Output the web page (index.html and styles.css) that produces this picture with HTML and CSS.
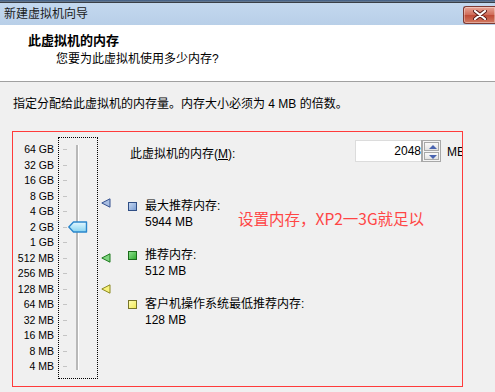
FILE: index.html
```html
<!DOCTYPE html>
<html lang="zh-CN">
  <head>
    <meta charset="UTF-8" />
    <title>新建虚拟机向导</title>
    <link rel="stylesheet" href="styles.css">
  </head>
  <body>
    <div class="window">
      <div class="top-edge"></div>
      <div class="titlebar">
        <span class="title">新建虚拟机向导</span>
        <button class="close" aria-label="关闭">
          <svg width="14" height="10" viewBox="0 0 14 10">
            <path d="M2 1 L12 9 M12 1 L2 9" stroke="#5a1e1a" stroke-width="4" stroke-linecap="round" />
            <path d="M2 1 L12 9 M12 1 L2 9" stroke="#fff" stroke-width="2.2" stroke-linecap="round" />
          </svg>
        </button>
      </div>

      <div class="header">
        <h1>此虚拟机的内存</h1>
        <p>您要为此虚拟机使用多少内存?</p>
      </div>

      <div class="content">
        <p class="intro">指定分配给此虚拟机的内存量。内存大小必须为 4 MB 的倍数。</p>

        <div class="panel">
          <ul class="scale">
            <li>64 GB</li>
            <li>32 GB</li>
            <li>16 GB</li>
            <li>8 GB</li>
            <li>4 GB</li>
            <li>2 GB</li>
            <li>1 GB</li>
            <li>512 MB</li>
            <li>256 MB</li>
            <li>128 MB</li>
            <li>64 MB</li>
            <li>32 MB</li>
            <li>16 MB</li>
            <li>8 MB</li>
            <li>4 MB</li>
          </ul>

          <!-- vertical slider -->
          <div class="slider">
            <ul class="ticks">
              <li></li><li></li><li></li><li></li><li></li>
              <li></li><li></li><li></li><li></li><li></li>
              <li></li><li></li><li></li><li></li><li></li>
            </ul>
            <div class="track"></div>
            <svg class="thumb" width="20" height="12" viewBox="0 0 20 12">
              <defs>
                <linearGradient id="thumbFill" x1="0" y1="0" x2="0" y2="1">
                  <stop offset="0" stop-color="#e4f8ff" />
                  <stop offset="1" stop-color="#86d3f0" />
                </linearGradient>
              </defs>
              <path d="M0.8 6 L5.5 1 H18.5 V11 H5.5 Z" fill="url(#thumbFill)" stroke="#2a86cc" stroke-width="1.4" stroke-linejoin="round" />
            </svg>
          </div>

          <div class="markers">
            <svg class="marker max" width="10" height="10" viewBox="0 0 10 10">
              <path d="M0.8 5 L9 0.8 V9.2 Z" fill="#a7bde2" stroke="#34508f" stroke-width="1" />
            </svg>
            <svg class="marker rec" width="10" height="10" viewBox="0 0 10 10">
              <path d="M0.8 5 L9 0.8 V9.2 Z" fill="#7fd47f" stroke="#1d7a1d" stroke-width="1" />
            </svg>
            <svg class="marker min" width="10" height="10" viewBox="0 0 10 10">
              <path d="M0.8 5 L9 0.8 V9.2 Z" fill="#f7f27c" stroke="#8c8820" stroke-width="1" />
            </svg>
          </div>

          <div class="details">
            <div class="mem-row">
              <label for="memSize">此虚拟机的内存(<u>M</u>):</label>
              <div class="spin">
                <input id="memSize" type="text" value="2048" />
                <div class="spin-btns">
                  <button class="up"></button>
                  <button class="down"></button>
                </div>
              </div>
              <span class="unit">MB</span>
            </div>

            <ul class="legend">
              <li>
                <span class="swatch blue"></span>
                <div>
                  <div>最大推荐内存:</div>
                  <div>5944 MB</div>
                </div>
              </li>
              <li>
                <span class="swatch green"></span>
                <div>
                  <div>推荐内存:</div>
                  <div>512 MB</div>
                </div>
              </li>
              <li>
                <span class="swatch yellow"></span>
                <div>
                  <div>客户机操作系统最低推荐内存:</div>
                  <div>128 MB</div>
                </div>
              </li>
            </ul>
          </div>

          <p class="note">设置内存，XP2一3G就足以</p>
        </div>
      </div>
    </div>
  </body>
</html>
```

FILE: styles.css
```css
/* Basic reset */
* {
  margin: 0;
  padding: 0;
  box-sizing: border-box;
}

body {
  font-family: "Liberation Sans", "Noto Sans CJK SC", sans-serif;
  font-size: 12px;
  color: #000;
  background-color: #f0f0f0;
  width: 495px;
  height: 392px;
  overflow: hidden;
}

ul {
  list-style: none;
}

.window {
  height: 392px;
  display: flex;
  flex-direction: column;
}

/* Title bar */
.top-edge {
  height: 3px;
  background: linear-gradient(#3c5a84, #6f7f92);
  border-bottom: 1px solid #3a3f46;
}

.titlebar {
  height: 22px;
  display: flex;
  align-items: center;
  justify-content: space-between;
  padding-left: 4px;
  background: linear-gradient(#c3d8ef, #b8cfe8);
}

.title {
  line-height: 16px;
  color: #1a1a1a;
}

.close {
  width: 32px;
  height: 18px;
  margin-top: 1px;
  display: flex;
  align-items: center;
  justify-content: center;
  border: 1px solid #7d3a33;
  border-right: none;
  border-radius: 3px 0 0 3px;
  background: linear-gradient(#e8a597, #cf6a57 50%, #bf4a36 51%, #d27a62);
  box-shadow: inset 0 0 0 1px rgba(255, 255, 255, 0.35);
}

/* Header */
.header {
  height: 57px;
  background-color: #fff;
  padding-top: 7px;
  border-bottom: 1px solid #a0a0a0;
}

.header h1 {
  font-size: 13px;
  font-weight: bold;
  line-height: 18px;
  padding-left: 28px;
}

.header p {
  line-height: 18px;
  padding-left: 56px;
}

/* Content */
.content {
  flex: 1;
  padding: 14px 0 0 13px;
}

.intro {
  line-height: 16px;
}

.panel {
  position: relative;
  margin: 19px 0 0 -1px;
  width: 451px;
  height: 256px;
  border: 1px solid #ff3b3b;
  padding: 5px 0 0 0;
  display: flex;
  overflow: hidden;
}

.scale {
  flex: none;
  width: 41px;
  margin: 5px 4px 0 0;
  text-align: right;
  font-size: 10.5px;
}

.scale li {
  height: 15.5px;
  line-height: 15.5px;
}

/* Slider */
.slider {
  flex: none;
  position: relative;
  width: 40px;
  height: 242px;
  border: 1px dotted #000;
  display: flex;
}

.ticks {
  margin: 4px 0 0 4px;
  width: 5px;
}

.ticks li {
  height: 15.5px;
  display: flex;
  align-items: center;
}

.ticks li::before {
  content: "";
  width: 4px;
  height: 1px;
  background-color: #c4c4c4;
}

.track {
  margin: 7px 0 0 8px;
  width: 3px;
  height: 225px;
  border-left: 2px solid #b8b8b8;
  border-right: 1px solid #fff;
}

.thumb {
  position: absolute;
  left: 9px;
  top: 83px;
}

/* Value markers beside the slider */
.markers {
  flex: none;
  position: relative;
  width: 30px;
}

.marker {
  position: absolute;
  left: 3px;
}

.marker.max {
  top: 61px;
}

.marker.rec {
  top: 116px;
}

.marker.min {
  top: 147px;
}

/* Details column */
.details {
  flex: 1;
  min-width: 0;
}

.mem-row {
  display: flex;
  align-items: center;
  margin-top: 3px;
  height: 22px;
  white-space: nowrap;
}

.mem-row label {
  width: 227px;
  flex: none;
  padding: 3px 0 0 2px;
}

.spin {
  width: 86px;
  height: 22px;
  flex: none;
  display: flex;
  border: 1px solid #dcdcdc;
  background-color: #fff;
}

.spin input {
  width: 66px;
  border: none;
  outline: none;
  font: inherit;
  font-size: 12px;
  text-align: right;
  padding-right: 1px;
  background: transparent;
}

.spin-btns {
  width: 18px;
  display: flex;
  flex-direction: column;
  gap: 1px;
  padding: 1px;
  border-left: 1px solid #a8a8a8;
  background-color: #f4f4f4;
  outline: 1px solid #a8a8a8;
}

.spin-btns button {
  flex: 1;
  border: 1px solid #a8a8a8;
  background: linear-gradient(#fafafa, #e2e2e2);
  position: relative;
}

.spin-btns button::after {
  content: "";
  position: absolute;
  left: 4px;
  top: 2px;
  border-left: 4px solid transparent;
  border-right: 4px solid transparent;
}

.spin-btns .up::after {
  border-bottom: 4px solid #4a64b0;
}

.spin-btns .down::after {
  border-top: 4px solid #4a64b0;
}

.unit {
  flex: none;
  margin-left: 6px;
  padding-top: 2px;
}

.legend {
  margin-top: 36px;
  display: flex;
  flex-direction: column;
  gap: 17px;
}

.legend li {
  display: flex;
  line-height: 16px;
}

.swatch {
  width: 9px;
  height: 9px;
  margin: 4px 8px 0 0;
  flex: none;
}

.swatch.blue {
  background: linear-gradient(135deg, #c4d6f0, #7c9fd4);
  border: 1px solid #2f4e85;
}

.swatch.green {
  background: linear-gradient(135deg, #8de08d, #32ad32);
  border: 1px solid #1b6b1b;
}

.swatch.yellow {
  background: linear-gradient(135deg, #fffdb0, #f1ea5a);
  border: 1px solid #77752a;
}

/* Hand-written annotation over the panel */
.note {
  position: absolute;
  left: 225px;
  top: 76px;
  font-family: "Noto Sans CJK SC", sans-serif;
  font-size: 15.5px;
  line-height: 20px;
  color: #ff4545;
  white-space: nowrap;
}
```
